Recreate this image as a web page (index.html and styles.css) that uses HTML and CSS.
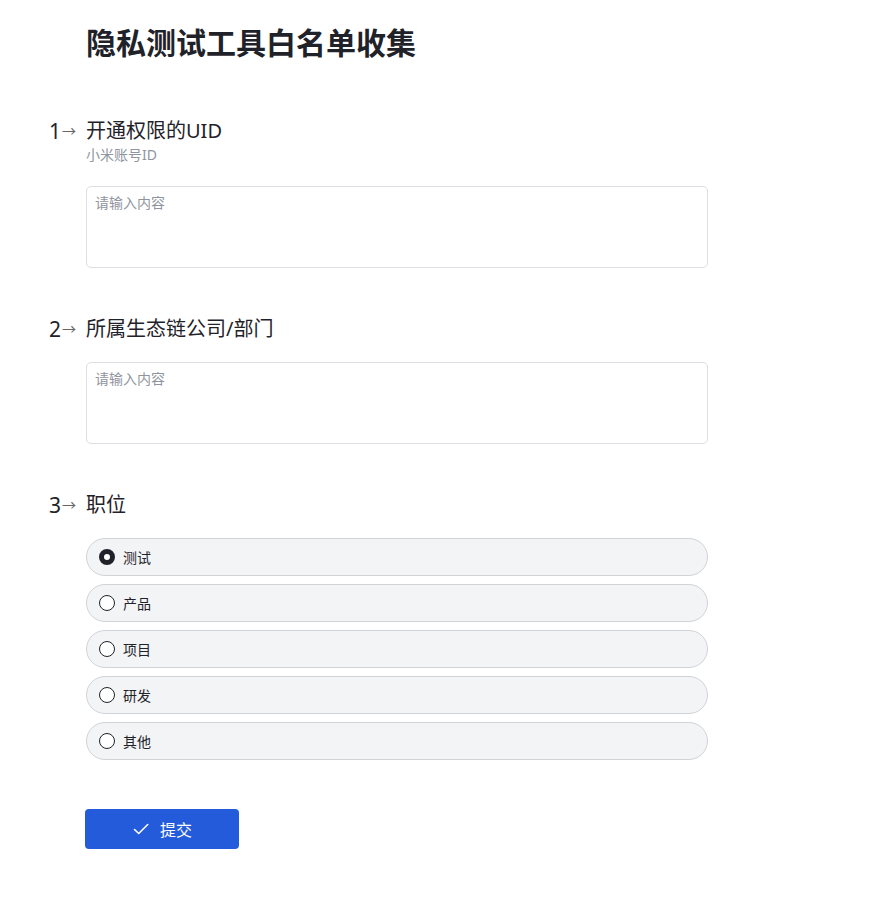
FILE: index.html
```html
<!DOCTYPE html>
<html lang="zh-CN">
<head>
  <meta charset="UTF-8">
  <title>隐私测试工具白名单收集</title>
  <link rel="stylesheet" href="styles.css">
</head>
<body>

  <div class="form">
    <h1 class="titulo">隐私测试工具白名单收集</h1>

    <div class="pergunta">
      <div class="num">1<span class="seta">→</span></div>
      <div class="corpo">
        <div class="rotulo">开通权限的UID</div>
        <div class="dica">小米账号ID</div>
        <textarea class="caixa" placeholder="请输入内容"></textarea>
      </div>
    </div>

    <div class="pergunta">
      <div class="num">2<span class="seta">→</span></div>
      <div class="corpo">
        <div class="rotulo">所属生态链公司/部门</div>
        <textarea class="caixa" placeholder="请输入内容"></textarea>
      </div>
    </div>

    <div class="pergunta">
      <div class="num">3<span class="seta">→</span></div>
      <div class="corpo">
        <div class="rotulo">职位</div>
        <div class="opcoes">
          <label class="opcao"><span class="radio marcado"></span>测试</label>
          <label class="opcao"><span class="radio"></span>产品</label>
          <label class="opcao"><span class="radio"></span>项目</label>
          <label class="opcao"><span class="radio"></span>研发</label>
          <label class="opcao"><span class="radio"></span>其他</label>
        </div>
      </div>
    </div>

    <div class="acoes">
      <button class="enviar">
        <svg width="18" height="18" viewBox="0 0 18 18" fill="none" stroke="white" stroke-width="1.6" stroke-linecap="round" stroke-linejoin="round"><path d="M2.5 9.5l4.2 4 9-9"/></svg>
        提交
      </button>
    </div>
  </div>

</body>
</html>
```

FILE: styles.css
```css
body {
  margin: 0;
  background: #fff;
  color: #1f2329;
  font-family: "Noto Sans", "Noto Sans CJK SC", sans-serif;
}
.form {
  padding: 23px 0 40px 86px;
  width: 622px;
}
.titulo {
  margin: 0 0 55px;
  font-size: 30px;
  line-height: 40px;
  font-weight: 700;
  color: #1f2329;
}
.pergunta {
  position: relative;
  margin-bottom: 48px;
}
.num {
  position: absolute;
  right: 100%;
  top: 0;
  padding-right: 10px;
  font-size: 21px;
  line-height: 26px;
  white-space: nowrap;
}
.seta {
  font-size: 14px;
  margin-left: 1px;
  vertical-align: 3px;
  color: #666;
}
.rotulo {
  font-size: 20px;
  line-height: 26px;
  margin-bottom: 20px;
}
.dica {
  font-size: 14px;
  line-height: 20px;
  color: #8f959e;
  margin: -19px 0 21px;
}
.caixa {
  display: block;
  box-sizing: border-box;
  width: 622px;
  height: 82px;
  padding: 7px 8px;
  border: 1px solid #dcdfe3;
  border-radius: 5px;
  resize: none;
  font-family: inherit;
  font-size: 14px;
  line-height: 18px;
  outline: none;
}
.caixa::placeholder {
  color: #8f959e;
}
.opcoes {
  display: flex;
  flex-direction: column;
  gap: 8px;
}
.opcao {
  display: flex;
  align-items: center;
  gap: 8px;
  box-sizing: border-box;
  height: 38px;
  padding: 0 0 1px 12px;
  background: #f3f4f6;
  border: 1px solid #d0d3d8;
  border-radius: 19px;
  font-size: 14px;
  color: #1f2329;
}
.radio {
  box-sizing: border-box;
  width: 16px;
  height: 16px;
  border: 1.5px solid #1f2329;
  border-radius: 50%;
  background: #fff;
}
.radio.marcado {
  border: 5px solid #1f2329;
}
.acoes {
  padding-top: 1px;
}
.enviar {
  display: flex;
  align-items: center;
  justify-content: center;
  gap: 10px;
  margin-left: -1px;
  width: 154px;
  height: 40px;
  border: none;
  border-radius: 4px;
  background: #245bdb;
  color: #fff;
  font-family: inherit;
  font-size: 16px;
  cursor: pointer;
}
```
